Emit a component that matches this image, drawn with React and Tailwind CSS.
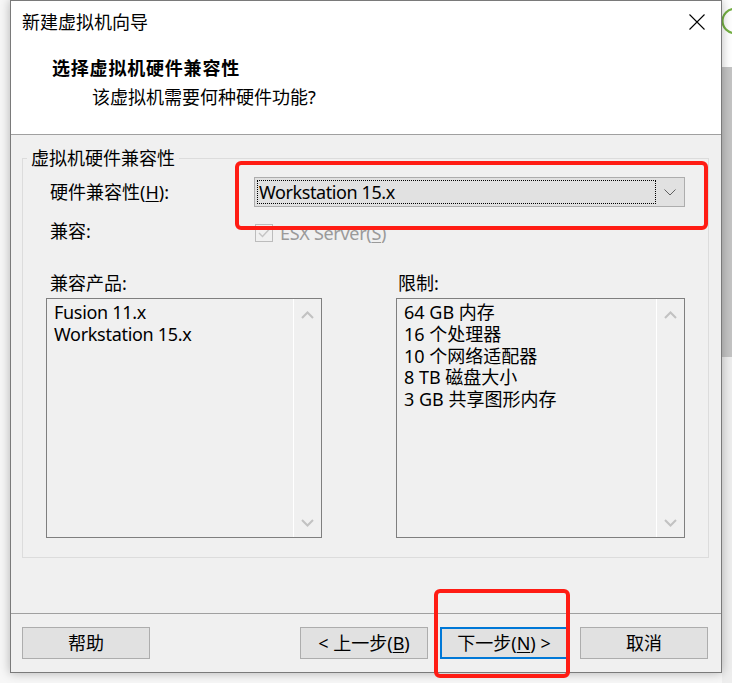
import React from 'react'

function CloseIcon() {
  return (
    <svg width="16" height="16" viewBox="0 0 16 16" className="block">
      <path d="M0.5 0.5L15.5 15.5M15.5 0.5L0.5 15.5" stroke="#000" strokeWidth="1.1" fill="none" />
    </svg>
  )
}

function ScrollChevron({ up }) {
  return (
    <svg width="13" height="8" viewBox="0 0 13 8" className="block">
      <path
        d={up ? 'M1 7L6.5 1.5L12 7' : 'M1 1L6.5 6.5L12 1'}
        stroke="#c2c2c2"
        strokeWidth="2"
        fill="none"
      />
    </svg>
  )
}

function ListBox({ items, className }) {
  return (
    <div className={`flex h-[240px] border border-[#7f7f7f] bg-[#f0f0f0] ${className}`}>
      <div className="flex-1 pl-[7px] pt-[3px] leading-[21.75px]">
        {items.map((t) => (
          <div key={t} className="whitespace-nowrap">{t}</div>
        ))}
      </div>
      <div className="flex w-[28px] flex-col items-center justify-between border-l border-white pb-[10px] pt-[12px]">
        <ScrollChevron up />
        <ScrollChevron />
      </div>
    </div>
  )
}

function Btn({ children, primary }) {
  return (
    <div
      className={`flex h-[32px] w-[128px] items-center justify-center bg-[#e1e1e1] ${
        primary ? 'border-2 border-[#0078d7]' : 'border border-[#adadad]'
      }`}
    >
      {children}
    </div>
  )
}

export default function App() {
  return (
    <div className="relative flex h-[683px] w-[732px] overflow-hidden bg-white font-['Noto_Sans','Noto_Sans_CJK_SC',sans-serif] text-[18px] leading-[24px] text-black">
      <div className="w-[10px] bg-[#f7f7f7]" />

      <div className="flex w-[712px] flex-col">
        <div className="relative z-10 flex h-[673px] flex-col border border-[#7a7a7a] bg-[#f0f0f0] shadow-[0_0_10px_rgba(0,0,0,0.28)]">
          {/* header */}
          <div className="h-[134px] border-b border-[#a0a0a0] bg-white pt-[9px]">
            <div className="flex items-center justify-between pl-[11px] pr-[16px]">
              <span>新建虚拟机向导</span>
              <CloseIcon />
            </div>
            <div className="mt-[22px] pl-[41px] font-bold tracking-[0.8px]">选择虚拟机硬件兼容性</div>
            <div className="mt-[5px] pl-[81px]">该虚拟机需要何种硬件功能?</div>
          </div>

          {/* body */}
          <div className="flex-1 pl-[11px] pr-[12px] pt-[23px]">
            <div className="relative h-[400px] border border-[#dcdcdc] pl-[23px] pr-[23px]">
              <span className="absolute -top-[13px] left-[4px] bg-[#f0f0f0] px-[4px]">虚拟机硬件兼容性</span>

              <div className="mt-[18px] flex h-[30px] items-center">
                <span className="w-[208px] pl-[4px]">
                  硬件兼容性(<span className="underline underline-offset-2">H</span>):
                </span>
                <div className="flex h-[30px] w-[431px] items-center border border-[#adadad] bg-[#e1e1e1] pl-[2px]">
                  <div className="flex h-[24px] w-[399px] items-center border border-dotted border-black pl-[1px] tracking-[-0.4px]">
                    Workstation 15.x
                  </div>
                  <div className="flex flex-1 justify-center">
                    <svg width="12" height="7" viewBox="0 0 12 7" className="block">
                      <path d="M0.5 0.5L6 6L11.5 0.5" stroke="#606060" strokeWidth="1" fill="none" />
                    </svg>
                  </div>
                </div>
              </div>

              <div className="mt-[17px] flex h-[18px] items-center">
                <span className="mb-[4px] w-[209px] pl-[4px]">兼容:</span>
                <div className="flex h-[18px] w-[18px] items-center justify-center border border-[#bcbcbc] bg-[#f0f0f0]">
                  <svg width="12" height="10" viewBox="0 0 12 10" className="block">
                    <path d="M1 5L4.5 8.5L11 1.5" stroke="#c4c4c4" strokeWidth="1.4" fill="none" />
                  </svg>
                </div>
                <span className="ml-[7px] tracking-[-0.3px] text-[#9a9a9a]">
                  ESX Server(<span className="underline underline-offset-2">S</span>)
                </span>
              </div>

              <div className="mt-[29px] flex">
                <div className="w-[276px] pl-[4px]">兼容产品:</div>
                <div className="ml-[74px] pl-[2px]">限制:</div>
              </div>

              <div className="mt-[3px] flex">
                <ListBox className="w-[276px] tracking-[-0.3px]" items={['Fusion 11.x', 'Workstation 15.x']} />
                <ListBox
                  className="ml-[74px] w-[289px]"
                  items={['64 GB 内存', '16 个处理器', '10 个网络适配器', '8 TB 磁盘大小', '3 GB 共享图形内存']}
                />
              </div>
            </div>
          </div>

          {/* footer */}
          <div className="flex h-[59px] border-t border-[#a0a0a0] pl-[11px] pr-[13px] pt-[13px]">
            <Btn>帮助</Btn>
            <div className="ml-auto flex gap-[12px]">
              <Btn>
                &lt; 上一步(<span className="underline underline-offset-2">B</span>)
              </Btn>
              <Btn primary>
                下一步(<span className="underline underline-offset-2">N</span>) &gt;
              </Btn>
              <Btn>取消</Btn>
            </div>
          </div>
        </div>
        <div className="flex-1 bg-[#f7f7f7]" />
      </div>

      <div className="flex w-[10px] flex-col">
        <div className="h-[67px] bg-white">
          <svg width="10" height="67" viewBox="0 0 10 67" className="block">
            <circle cx="12.5" cy="21" r="12" stroke="#74b043" strokeWidth="2.2" fill="none" />
          </svg>
        </div>
        <div className="h-[290px] bg-[#c4c4c4]" />
        <div className="flex-1 bg-[#eeeeee]" />
      </div>

      {/* red annotation boxes */}
      <div className="pointer-events-none absolute left-[235px] top-[161px] z-20 h-[69px] w-[473px] rounded-[6px] border-4 border-[#ff1c14]" />
      <div className="pointer-events-none absolute left-[434px] top-[589px] z-20 h-[89px] w-[136px] rounded-[6px] border-4 border-[#ff1c14]" />
    </div>
  )
}
